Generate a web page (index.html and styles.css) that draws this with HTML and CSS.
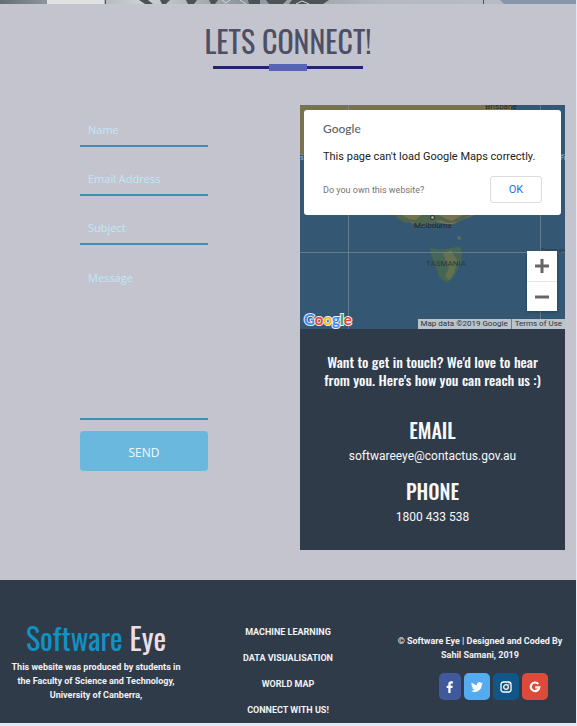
FILE: index.html
```html
<!DOCTYPE html>
<html lang="en">
<head>
<meta charset="utf-8">
<title>Software Eye</title>
<link rel="stylesheet" href="styles.css">
</head>
<body>
<div class="page">
  <svg class="banner" viewBox="0 0 576 4" preserveAspectRatio="none" aria-hidden="true">
    <defs>
      <linearGradient id="sky"><stop offset="0" stop-color="#646d75"/><stop offset=".08" stop-color="#8d959b"/><stop offset=".25" stop-color="#cfd3d6"/><stop offset=".42" stop-color="#8b959c"/><stop offset=".66" stop-color="#b5b8bf"/><stop offset="1" stop-color="#b9bdc5"/></linearGradient>
    </defs>
    <path fill="url(#sky)" d="M0 0h576v4H0z"/>
    <path fill="#e0e1e2" d="M47 0h57v4H47z"/>
    <path fill="#4c5256" d="M105 0h1v4h-1zM139 0h9l5 4h-8zM160 0h10l-4 4h-4zM186 0h11l-3 4h-6zM209 0h9l-3 4h-4zM248 0h12v4h-11zM266 0h21l-4 4h-14zM292 0h37l-6 4h-34zM483 0h1v4h-1z"/>
    <path fill="none" stroke="#d2d7da" d="M222 0l4 3 4-3M240 0l6 4M296 4l6-3 7 3"/>
    <path fill="#8796a8" d="M500 0h76v4h-72z"/>
  </svg>
  <main class="contact">
    <header class="heading">
      <h1>LETS CONNECT!</h1>
      <div class="rule"></div>
    </header>
    <div class="columns">
      <form class="form">
        <input type="text" placeholder="Name" aria-label="Name">
        <input type="email" placeholder="Email Address" aria-label="Email Address">
        <input type="text" placeholder="Subject" aria-label="Subject">
        <textarea placeholder="Message" aria-label="Message"></textarea>
        <button type="submit">SEND</button>
      </form>
      <section class="reach">
        <div class="map">
          <svg class="terrain" viewBox="0 0 265 224" preserveAspectRatio="xMidYMin slice" aria-hidden="true">
            <path fill="#345874" d="M0 0h265v225H0z"/>
            <path fill="#77724f" d="M0 0h212l-2 8-8 42-13 40-15 20-23 10-15-3-13 5-17-6-12-8-3-6H60L40 60 0 49z"/>
            <path fill="#4e6650" d="M94 110h77l-12 7-11 1-8-3-9 4-10 2-9-4-7 1-6-4z"/>
            <path fill="#77724f" d="m102 110 20 0-7 5-6-1zM139 110h24l-11 6-6-2z"/>
            <path fill="#456555" d="m130 142 9 3 13-2 8-2 2 7-1 9-5 11-4 6-6 4-7-6-4-13-4-9z"/>
            <path fill="#647151" d="m143 149 8-4 6 10-3 14-5 6-4-4 4-8zM157 132l2-1 2 2-1 2-2-1z"/>
            <path stroke="#78909a" stroke-opacity=".65" fill="none" d="M48.500 0v225M240.500 0v225M0 147.500h265M0 49.500h265"/>
            <circle cx="132.500" cy="112.500" r="2" fill="#a0a190" stroke="#202b2b"/>
            <g class="place">
              <text x="201" y="4">Brisbane</text>
              <text x="133" y="123">Melbourne</text>
              <text class="state" x="146" y="161">TASMANIA</text>
              <text class="sea" x="253" y="148">Tasman</text>
            </g>
            <g fill="#a9b8c4" font-size="7"><text x="0" y="55">s</text><text x="260" y="55">Fr</text></g>
          </svg>
          <div class="dialog" role="dialog" aria-label="Google Maps">
            <div class="wordmark">Google</div>
            <p class="notice">This page can't load Google Maps correctly.</p>
            <div class="dialog-foot">
              <a href="#">Do you own this website?</a>
              <button type="button">OK</button>
            </div>
          </div>
          <div class="zoom">
            <button type="button" aria-label="Zoom in"><svg viewBox="0 0 14 14"><path d="M5.500 0h3v5.500H14v3H8.500V14h-3V8.500H0v-3h5.500z"/></svg></button>
            <button type="button" aria-label="Zoom out"><svg viewBox="0 0 14 14"><path d="M0 5.500h14v3H0z"/></svg></button>
          </div>
          <div class="logo"><span class="b">G</span><span class="r">o</span><span class="y">o</span><span class="b">g</span><span class="g">l</span><span class="r">e</span></div>
          <div class="credits"><span>Map data ©2019 Google</span><a href="#">Terms of Use</a></div>
        </div>
        <div class="details">
          <h2>Want to get in touch? We'd love to hear from you. Here's how you can reach us :)</h2>
          <h3>EMAIL</h3>
          <p>softwareeye@contactus.gov.au</p>
          <h3>PHONE</h3>
          <p>1800 433 538</p>
        </div>
      </section>
    </div>
  </main>
  <footer class="footer">
    <div class="about">
      <div class="brand"><span>Software</span> Eye</div>
      <p>This website was produced by students in the Faculty of Science and Technology, University of Canberra,</p>
    </div>
    <nav class="links">
      <a href="#">MACHINE LEARNING</a>
      <a href="#">DATA VISUALISATION</a>
      <a href="#">WORLD MAP</a>
      <a href="#">CONNECT WITH US!</a>
    </nav>
    <div class="legal">
      <p>© Software Eye | Designed and Coded By Sahil Samani, 2019</p>
      <div class="social">
        <a class="facebook" href="#" aria-label="Facebook"><svg viewBox="0 0 12 12"><path fill="#fff" d="M4.300 12V6.900H2.700V4.700h1.600V3.200C4.300 1.200 5.400.3 7.200.3c.8 0 1.500.1 1.700.1v2H7.700c-.9 0-1.100.4-1.100 1.100v1.200h2.200l-.4 2.200H6.600V12z"/></svg></a>
        <a class="twitter" href="#" aria-label="Twitter"><svg viewBox="0 0 24 24"><path fill="#fff" d="M24 4.600c-.9.400-1.800.7-2.800.8 1-.6 1.800-1.600 2.200-2.700-1 .6-2 1-3.100 1.200A4.900 4.900 0 0 0 11.900 8.400C7.700 8.200 4.100 6.200 1.700 3.200a4.900 4.900 0 0 0 1.500 6.500c-.8 0-1.600-.2-2.200-.6a4.900 4.900 0 0 0 3.900 4.900c-.7.200-1.500.2-2.200.1a4.900 4.900 0 0 0 4.600 3.400A9.900 9.900 0 0 1 0 19.500 14 14 0 0 0 21.500 7.100C22.500 6.400 23.300 5.600 24 4.600z"/></svg></a>
        <a class="instagram" href="#" aria-label="Instagram"><svg viewBox="0 0 12 12"><rect x="1" y="1" width="10" height="10" rx="2.500" fill="none" stroke="#fff" stroke-width="1.300"/><circle cx="6" cy="6" r="2.300" fill="none" stroke="#fff" stroke-width="1.300"/><circle cx="8.900" cy="3.100" r=".7" fill="#fff"/></svg></a>
        <a class="google" href="#" aria-label="Google"><svg viewBox="0 0 12 12"><path fill="none" stroke="#fff" stroke-width="2.200" d="M9.300 3A4.300 4.300 0 1 0 10.300 6.300H6.200"/></svg></a>
      </div>
    </div>
  </footer>
</div>
</body>
</html>
```
FILE: styles.css
```css
* { box-sizing: border-box; }

body {
  margin: 0;
  padding-right: 1px;
  background: #e3e9f3;
  font-family: Roboto, "Liberation Sans", sans-serif;
}

h1, h2, h3, p { margin: 0; }
a { color: inherit; text-decoration: none; }
button { font: inherit; cursor: pointer; }

.page { background: #c4c4ce; }
.banner { display: block; width: 100%; height: 4px; }

.contact { padding-bottom: 30px; }

.heading { padding-top: 15px; }
.heading h1 {
  margin-bottom: 1px;
  color: #4d4f66;
  font: 400 30px/44px Oswald, sans-serif;
  text-align: center;
}
.rule {
  width: 150px;
  height: 7px;
  margin: 0 auto;
  background:
    linear-gradient(#5964b5, #5964b5) center / 38px 7px no-repeat,
    linear-gradient(#25236b, #25236b) center / 150px 3px no-repeat;
}

.columns {
  display: grid;
  grid-template-columns: 1fr 1fr;
  margin-top: 34px;
}

.form {
  display: flex;
  flex-direction: column;
  gap: 15px;
  padding: 8px 80px 0;
}
.form input, .form textarea {
  width: 100%;
  height: 34px;
  padding: 0 8px;
  border: 0;
  border-bottom: 2px solid #438db3;
  border-radius: 0;
  background: transparent;
  color: #345;
  font: 500 11px/16px "Open Sans", "Noto Sans", sans-serif;
}
.form textarea { height: 160px; padding-top: 10px; resize: none; }
.form ::placeholder { color: #bfe8fa; opacity: 1; }
.form button {
  height: 40px;
  margin-top: -4px;
  padding: 3px 0 0;
  border: 0;
  border-radius: 4px;
  background: #6bb8de;
  color: #f2faff;
  font: 500 12px/16px "Open Sans", "Noto Sans", sans-serif;
}

.reach { padding: 0 11px 0 12px; }
.map { position: relative; height: 224px; overflow: hidden; }
.terrain { display: block; width: 100%; height: 100%; }
.place { font-size: 8px; fill: #1c2529; text-anchor: middle; }
.place .state { fill: #2f3a39; font-size: 8px; }
.place .sea { fill: #22425c; font-size: 7px; }

.dialog {
  position: absolute;
  inset: 5px 4px auto;
  padding: 11px 19px 12px;
  border-radius: 3px;
  background: #fff;
  color: #212121;
}
.wordmark { color: #5f6368; font: 500 12px/16px Lato, sans-serif; }
.notice { margin-top: 12px; font-size: 11px; line-height: 16px; white-space: nowrap; }
.dialog-foot {
  display: flex;
  align-items: center;
  justify-content: space-between;
  margin-top: 11px;
  color: #757575;
  font-size: 9px;
}
.dialog-foot button {
  width: 52px;
  height: 27px;
  padding: 0;
  border: 1px solid #dadce0;
  border-radius: 3px;
  background: #fff;
  color: #1a73e8;
  font-size: 11px;
}

.zoom {
  position: absolute;
  right: 8px;
  bottom: 18px;
  display: grid;
  width: 30px;
  background: #fff;
  box-shadow: 0 1px 3px rgba(0, 0, 0, .3);
}
.zoom button {
  display: grid;
  height: 30px;
  padding: 0;
  border: 0;
  background: none;
  place-items: center;
}
.zoom button + button { border-top: 1px solid #e6e6e6; }
.zoom svg { width: 14px; height: 14px; fill: #666; }

.logo {
  position: absolute;
  bottom: 0;
  left: 4px;
  font: 700 15px/20px Lato, sans-serif;
  -webkit-text-stroke: 2px #e9eef2;
  paint-order: stroke fill;
}
.logo .b { color: #4285f4; }
.logo .r { color: #ea4335; }
.logo .y { color: #fbbc05; }
.logo .g { color: #34a853; }

.credits {
  position: absolute;
  right: 0;
  bottom: 0;
  display: flex;
  background: #b9c4cd;
  color: #333;
  font-size: 8px;
  line-height: 10px;
}
.credits span, .credits a { padding: 0 3px; }
.credits a { border-left: 1px solid #6f7c87; }

.details {
  padding: 24px 16px 13px;
  background: #303b49;
  color: #f7f8fa;
  text-align: center;
}
.details h2, .details h3 { font-family: Oswald, sans-serif; }
.details h2 { margin-bottom: 26px; font-size: 14px; font-weight: 500; line-height: 18px; }
.details h3 { font-size: 20px; font-weight: 500; line-height: 30px; }
.details p { margin-bottom: 9px; font-size: 12px; line-height: 22px; }

.footer {
  display: grid;
  grid-template-columns: repeat(3, 1fr);
  height: 143px;
  background: #303b49;
  color: #f0f2f5;
  font-size: 9px;
  font-weight: 700;
  line-height: 14px;
  text-align: center;
}
.about { padding: 36px 8px 0; }
.brand { color: #ecdfe4; font: 400 30px/44px Oswald, sans-serif; }
.brand span { color: #1191c4; }
.links { display: grid; align-content: start; gap: 12px; padding-top: 45px; }
.legal { padding: 54px 8px 0; }
.social { display: flex; justify-content: center; gap: 3px; margin: 11px 0 0 26px; }
.social a {
  display: grid;
  width: 26px;
  height: 27px;
  border-radius: 5px;
  place-items: center;
}
.social svg { width: 12px; height: 12px; }
.social .facebook { width: 22px; background: #3f599b; }
.twitter { background: #54acee; }
.instagram { background: #125688; }
.google { background: #dc4b39; }
```
